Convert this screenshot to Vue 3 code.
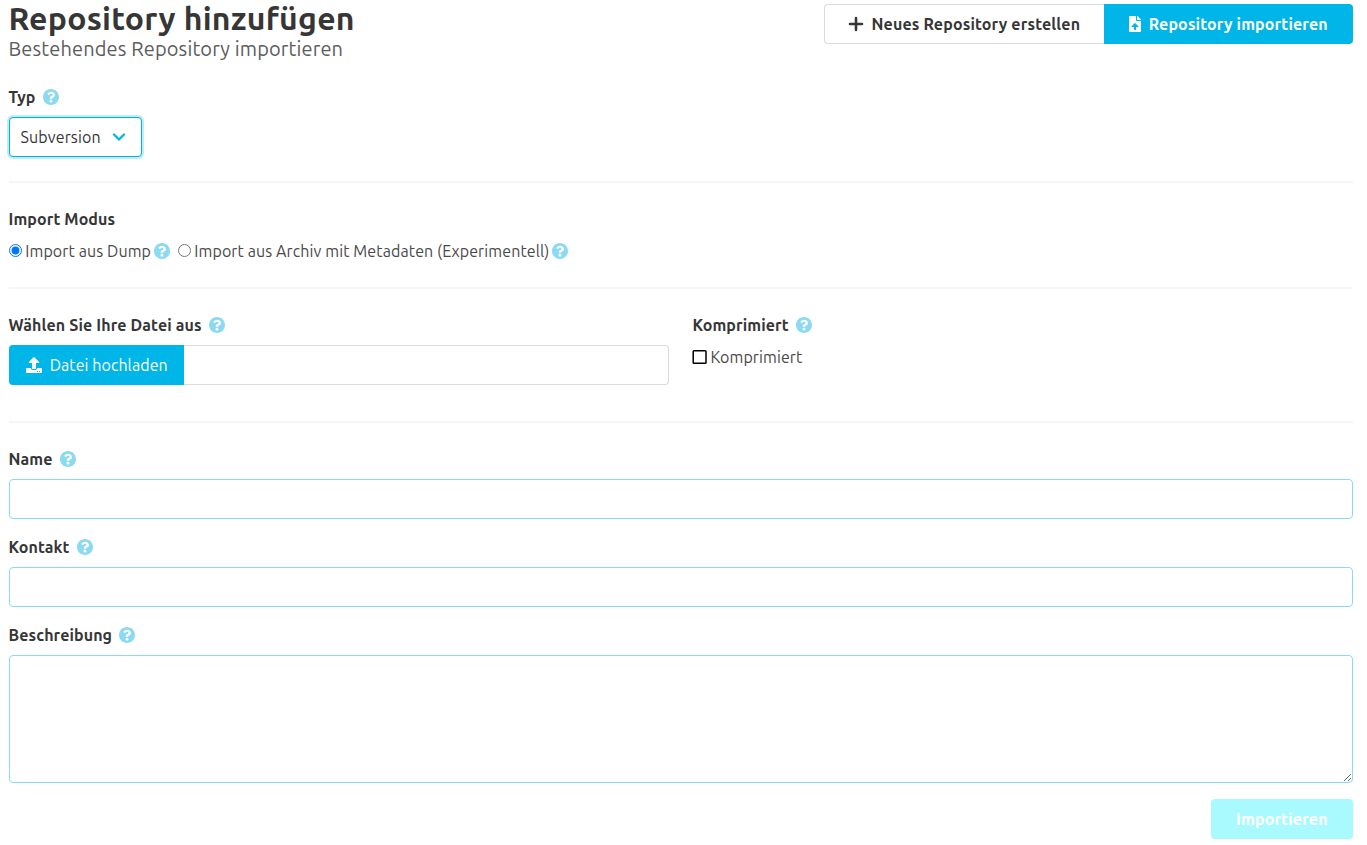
<script setup>
import { ref, h } from 'vue'

const mode = ref('dump')
const name = ref('')
const contact = ref('')
const description = ref('')

const helpPath = 'M504 256c0 136.997-111.043 248-248 248S8 392.997 8 256C8 119.083 119.043 8 256 8s248 111.083 248 248zM262.655 90c-54.497 0-89.255 22.957-116.549 63.758-3.536 5.286-2.353 12.415 2.715 16.258l34.699 26.31c5.205 3.947 12.621 3.008 16.665-2.122 17.864-22.658 30.113-35.797 57.303-35.797 20.429 0 45.698 13.148 45.698 32.958 0 14.976-12.363 22.667-32.534 33.976C247.128 238.528 216 254.941 216 296v4c0 6.627 5.373 12 12 12h56c6.627 0 12-5.373 12-12v-1.333c0-28.462 83.186-29.647 83.186-106.667 0-58.002-60.165-102-116.531-102zM256 338c-25.365 0-46 20.635-46 46 0 25.364 20.635 46 46 46s46-20.636 46-46c0-25.365-20.635-46-46-46z'
const HelpIcon = () => h('svg', { viewBox: '8 8 496 496', width: 16, height: 16, fill: '#8bdaf2' }, [h('path', { d: helpPath })])
</script>

<template>
  <main class="page">
    <header class="header">
      <div>
        <h1 class="title">Repository hinzufügen</h1>
        <p class="subtitle">Bestehendes Repository importieren</p>
      </div>
      <div class="tabs">
        <button class="tab tab-create">
          <svg class="plus" viewBox="0 0 16 16" width="16" height="16"><path d="M8 2.1v11.8M2 8h12" /></svg>
          <span class="t-create">Neues Repository erstellen</span>
        </button>
        <button class="tab tab-import">
          <svg viewBox="0 0 384 512" width="12" height="16"><path fill="currentColor" d="M224 136V0H24C10.7 0 0 10.7 0 24v464c0 13.300 10.700 24 24 24h336c13.300 0 24-10.700 24-24V160H248c-13.200 0-24-10.800-24-24zm65.180 216.010H224v80c0 8.840-7.160 16-16 16h-32c-8.840 0-16-7.160-16-16v-80H94.820c-14.280 0-21.410-17.290-11.270-27.360l96.420-95.700c6.650-6.610 17.390-6.610 24.040 0l96.420 95.700c10.150 10.070 3.030 27.360-11.250 27.360zM377 105L279.100 7c-4.500-4.500-10.600-7-17-7H256v128h128v-6.100c0-6.300-2.500-12.400-7-16.900z" /></svg>
          <span class="t-import">Repository importieren</span>
        </button>
      </div>
    </header>

    <section class="type">
      <div class="label"><span class="t-typ">Typ</span><HelpIcon /></div>
      <button class="select">
        <span class="t-sub">Subversion</span>
        <svg viewBox="0 0 16 16" width="16" height="16"><path d="M3 5.500l5 5 5-5" /></svg>
      </button>
    </section>

    <hr />

    <section>
      <div class="label"><span class="t-mode">Import Modus</span></div>
      <div class="radios">
        <label class="choice"><input v-model="mode" type="radio" value="dump" /><span class="t-dump">Import aus Dump</span><HelpIcon /></label>
        <label class="choice"><input v-model="mode" type="radio" value="archive" /><span class="t-archive">Import aus Archiv mit Metadaten (Experimentell)</span><HelpIcon /></label>
      </div>
    </section>

    <hr />

    <section class="columns">
      <div>
        <div class="label"><span class="t-file">Wählen Sie Ihre Datei aus</span><HelpIcon /></div>
        <div class="file">
          <button class="upload">
            <svg viewBox="0 0 512 512" width="16" height="16"><path fill="currentColor" d="M296 384h-80c-13.300 0-24-10.700-24-24V192h-87.700c-17.800 0-26.700-21.500-14.100-34.100L242.300 5.700c7.500-7.500 19.800-7.500 27.300 0l152.200 152.200c12.600 12.600 3.700 34.100-14.100 34.100H320v168c0 13.300-10.700 24-24 24zm216-8v112c0 13.300-10.700 24-24 24H24c-13.300 0-24-10.700-24-24V376c0-13.300 10.700-24 24-24h136v8c0 30.900 25.100 56 56 56h80c30.900 0 56-25.100 56-56v-8h136c13.300 0 24 10.700 24 24zm-124 88c0-11-9-20-20-20s-20 9-20 20 9 20 20 20 20-9 20-20zm64 0c0-11-9-20-20-20s-20 9-20 20 9 20 20 20 20-9 20-20z" /></svg>
            <span class="t-upload">Datei hochladen</span>
          </button>
          <span class="filename"></span>
        </div>
      </div>
      <div>
        <div class="label"><span class="t-comp">Komprimiert</span><HelpIcon /></div>
        <div class="check">
          <svg class="box" viewBox="0 0 16 16" width="16" height="16"><rect x="1.200" y="1.800" width="12.800" height="12.400" rx=".8" /></svg>
          <span class="t-compressed">Komprimiert</span>
        </div>
      </div>
    </section>

    <hr />

    <form class="fields" @submit.prevent>
      <div>
        <div class="label"><span class="t-name">Name</span><HelpIcon /></div>
        <input v-model="name" class="field" type="text" />
      </div>
      <div>
        <div class="label"><span class="t-contact">Kontakt</span><HelpIcon /></div>
        <input v-model="contact" class="field" type="text" />
      </div>
      <div>
        <div class="label"><span class="t-desc">Beschreibung</span><HelpIcon /></div>
        <textarea v-model="description" class="field area"></textarea>
      </div>
      <button class="submit" disabled><span class="t-submit">Importieren</span></button>
    </form>
  </main>
</template>

<style>
body { background: #fff; }
</style>

<style scoped>
* { box-sizing: border-box; }
.page { padding: 4px 14px 0 9px; color: #4a4a4a; font: 16px/24px Ubuntu, "Noto Sans", sans-serif; }
.page span { white-space: nowrap; }
svg { display: block; flex: none; }
button { font: inherit; margin: 0; border: 0; display: flex; align-items: center; height: 40px; text-align: left; }

.header { display: flex; justify-content: space-between; height: 81px; }
.title { margin: -4px 0 0 -0.5px; font-size: 32px; line-height: 36px; font-weight: 700; color: #363636; letter-spacing: 0.25px; }
.subtitle { margin: 0 0 0 -0.5px; font-size: 20px; line-height: 25px; color: #5c5c5c; letter-spacing: 0.13px; }
.tabs { display: flex; }
.tab { font-weight: 700; }
.tab-create { width: 280px; padding: 0 0 0 23px; gap: 7.500px; background: #fff; color: #363636; border: 1px solid #dbdbdb; border-right: 0; border-radius: 4px 0 0 4px; }
.tab-import { width: 249px; padding: 0 0 0 25px; gap: 7.700px; background: #00b5e8; color: #fff; border-radius: 0 4px 4px 0; }
.plus { fill: none; stroke: currentColor; stroke-width: 2.6; stroke-linecap: round; }

.label { display: flex; align-items: center; height: 24px; margin-bottom: 8px; font-weight: 700; color: #363636; }
.label span { margin-right: 7px; text-indent: -0.5px; }
.select { width: 133px; padding: 0 0 0 10.600px; gap: 9.400px; background: #fff; color: #363636; border: 1px solid #00b2e3; border-radius: 4px; box-shadow: 0 0 0 2px rgba(0, 178, 227, 0.25); }
.select svg { fill: none; stroke: #00b5e8; stroke-width: 2.3; stroke-linecap: round; stroke-linejoin: round; }

hr { height: 2px; margin: 24px 0; border: 0; background: #f5f5f5; }

.radios { display: flex; gap: 8px; height: 24px; }
.choice { display: flex; align-items: center; }
.choice input { width: 13px; height: 13px; margin: 0 3px 1px 0; }
.choice span { margin-right: 3px; text-indent: 0.3px; }

.columns { display: grid; grid-template-columns: 660px 660px; column-gap: 24px; height: 84px; }
.file { display: flex; }
.upload { width: 175px; padding: 0 0 0 16.500px; gap: 8.200px; background: #00b5e8; color: #fff; border-radius: 4px 0 0 4px; }
.filename { flex: 1; border: 1px solid #dbdbdb; border-left: 0; border-radius: 0 4px 4px 0; }
.check { display: flex; align-items: center; height: 24px; }
.box { margin: 0 2.400px 0 -1px; fill: none; stroke: #000; stroke-width: 1.5; }

.fields { display: flex; flex-direction: column; gap: 16px; }
.field { display: block; width: 100%; height: 40px; margin: 0; padding: 0 11px; font: inherit; background: #fff; border: 1px solid #8bdaf2; border-radius: 4px; outline: none; }
.area { height: 128px; resize: vertical; }
.submit { align-self: flex-end; width: 142px; padding: 0 0 0 25px; background: #a9fafe; color: #fff; font-weight: 700; border-radius: 4px; }

.t-create, .t-import, .t-submit { letter-spacing: 0.15px; }
.t-typ { width: 27px; letter-spacing: 0.05px; }
.t-sub { width: 81px; letter-spacing: 0.12px; }
.t-mode { letter-spacing: 0.1px; }
.t-dump { width: 126px; letter-spacing: 0.1px; }
.t-archive { width: 355px; letter-spacing: 0.11px; }
.t-file { width: 193px; letter-spacing: 0.12px; }
.t-upload { letter-spacing: 0.07px; }
.t-comp { width: 96px; letter-spacing: 0.1px; }
.t-compressed { letter-spacing: 0.1px; }
.t-name { width: 44px; letter-spacing: 0.07px; }
.t-contact { width: 61px; letter-spacing: 0.12px; }
.t-desc { width: 103px; letter-spacing: 0.1px; }
</style>
